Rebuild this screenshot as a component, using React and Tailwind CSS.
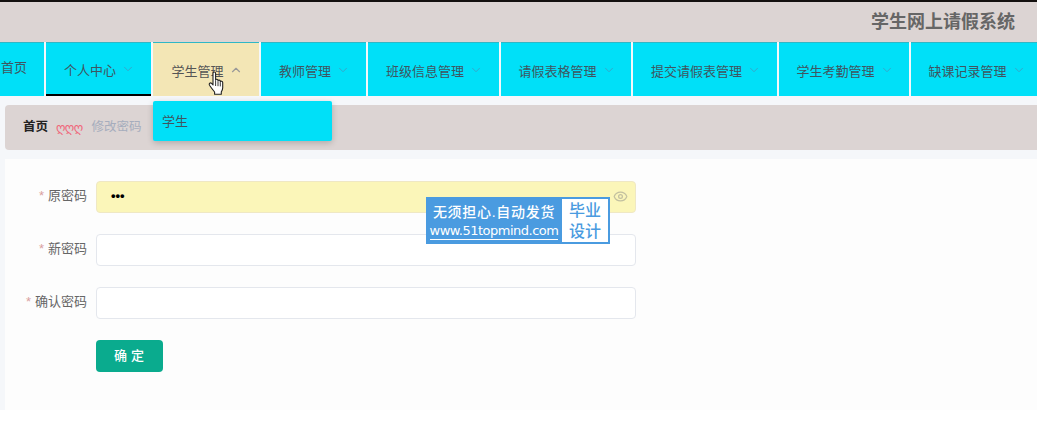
import { ChevronDown, ChevronUp, Eye } from 'lucide-react';

const menus = [
  { name: '个人中心', width: 'w-[105px]', active: true },
  { name: '学生管理', width: 'w-[106px]', open: true },
  { name: '教师管理', width: 'w-[105px]' },
  { name: '班级信息管理', width: 'w-[131px]' },
  { name: '请假表格管理', width: 'w-[130px]' },
  { name: '提交请假表管理', width: 'w-[144px]' },
  { name: '学生考勤管理', width: 'w-[130px]' },
  { name: '缺课记录管理', width: 'w-[130px]' },
];

function Field({ label, filled, children }) {
  return (
    <div className="flex items-center gap-[9px]">
      <label className="w-[82px] pb-[3px] text-right text-[13px] leading-none text-[#666]">
        <span className="mr-[4px] text-[#d9a0a0]">*</span>{label}
      </label>
      <div className={`relative h-[32px] w-[540px] rounded-[4px] border ${filled ? 'border-[#efe8c4] bg-[#fbf6b9]' : 'border-[#e4e7ed] bg-white'}`}>
        {children}
      </div>
    </div>
  );
}

function HandCursor() {
  return (
    <svg className="absolute left-[55px] top-[28px]" width="18" height="25" viewBox="0 0 18 25">
      <path
        d="M5 2.2c0-1.6 2.6-1.6 2.6 0v7c0-1.2 2.4-1.2 2.4 0.2v.6c0-1.2 2.3-1.2 2.3.3v.6c0-1.1 2.4-1 2.4.6v5.2c0 2-.8 3.2-1.4 4.2v2.3H6.6v-2.2C5 19 3.4 17 1.5 14.2.5 12.6 2.4 11.2 3.6 12.4L5 14z"
        fill="#fff"
        stroke="#222"
        strokeWidth="1.1"
        strokeLinejoin="round"
      />
      <path d="M7.6 10v5M10 10.6v4.6M12.3 11.4v4" stroke="#222" strokeWidth="0.9" fill="none" />
    </svg>
  );
}

export default function App() {
  return (
    <div className="relative h-[441px] w-[1037px] overflow-hidden bg-white font-['Liberation_Sans','Noto_Sans_CJK_SC',sans-serif]">
      <header className="flex h-[42px] items-center justify-end border-t-2 border-[#14100f] bg-[#dcd4d3] pr-[22px]">
        <h1 className="text-[18px] font-bold text-[#666]">学生网上请假系统</h1>
      </header>

      <nav className="flex h-[54px] bg-[#f5f7fa] text-[13px] text-[#3f5560]">
        <div className="flex h-full w-[44px] shrink-0 items-center border-t border-[#2fb7c6] bg-[#00e0f8] pb-[4px] pl-[1px]">首页</div>
        <div className="ml-[2px] flex gap-[2px]">
          {menus.map((m) => (
            <div
              key={m.name}
              className={`relative flex h-full shrink-0 items-center justify-center gap-[5px] border-t border-[#2fb7c6] pl-[2px] pt-[4px] ${m.width} ${m.open ? 'bg-[#f3e6b5] text-[#555]' : 'bg-[#00e0f8]'} ${m.active ? 'border-b-2 border-b-black' : ''}`}
            >
              {m.name}
              {m.open ? (
                <ChevronUp className="-mt-[3px] h-[14px] w-[14px] shrink-0 text-[#999]" />
              ) : (
                <ChevronDown className="-mt-[3px] h-[14px] w-[14px] shrink-0 text-[#3a9fc4]" strokeWidth={1.5} />
              )}
              {m.open && <HandCursor />}
              {m.open && (
                <div className="absolute left-0 top-[58px] z-10 flex h-[40px] w-[179px] items-center rounded-[2px] bg-[#00e0f8] pl-[9px] pt-[2px] text-[13px] text-[#3f5560] shadow-[0_2px_6px_rgba(0,0,0,0.2)]">
                  学生
                </div>
              )}
            </div>
          ))}
        </div>
      </nav>

      <div className="bg-[#f5f7fa] pl-[5px] pt-[9px]">
        <div className="flex h-[45px] items-center rounded-l-[4px] bg-[#dcd4d3] pl-[18px] text-[12.5px]">
          <span className="font-bold text-[#222]">首页</span>
          <span className="ml-[8px] mr-[9px] font-['DejaVu_Sans'] text-[12px] tracking-[-0.6px] text-[#f0667a]">ღღღ</span>
          <span className="text-[#a6adbd]">修改密码</span>
        </div>
        <main className="mt-[9px] flex h-[251px] flex-col gap-[21px] bg-[#fdfdfd] pt-[22px]">
          <Field label="原密码" filled>
            <span className="absolute left-[14px] top-[4px] text-[13px] font-bold text-black">•••</span>
            <Eye className="absolute right-[7px] top-[7px] h-[15px] w-[15px] text-[#c2c0a0]" />
          </Field>
          <Field label="新密码" />
          <Field label="确认密码" />
          <button className="ml-[91px] h-[32px] w-[67px] rounded-[4px] bg-[#0aab8e] pl-[3px] text-[13px] font-medium tracking-[4px] text-white">
            确定
          </button>
        </main>
      </div>

      {/* watermark over the form */}
      <div className="absolute left-[426px] top-[197px] flex h-[47px] w-[184px] items-center bg-[#4a9be0] pr-[2px] text-white">
        <div className="flex w-[136px] flex-col items-center">
          <span className="text-[14px] leading-[22px] font-medium tracking-[0.7px]">无须担心.自动发货</span>
          <span className="border-b border-white font-['DejaVu_Sans'] text-[13px] leading-[16px] font-medium tracking-[-0.5px]">www.51topmind.com</span>
        </div>
        <div className="flex h-[43px] w-[46px] flex-col items-center justify-center bg-white text-[16px] leading-[21px] font-medium text-[#4a9be0]">
          <span>毕业</span>
          <span>设计</span>
        </div>
      </div>
    </div>
  );
}
